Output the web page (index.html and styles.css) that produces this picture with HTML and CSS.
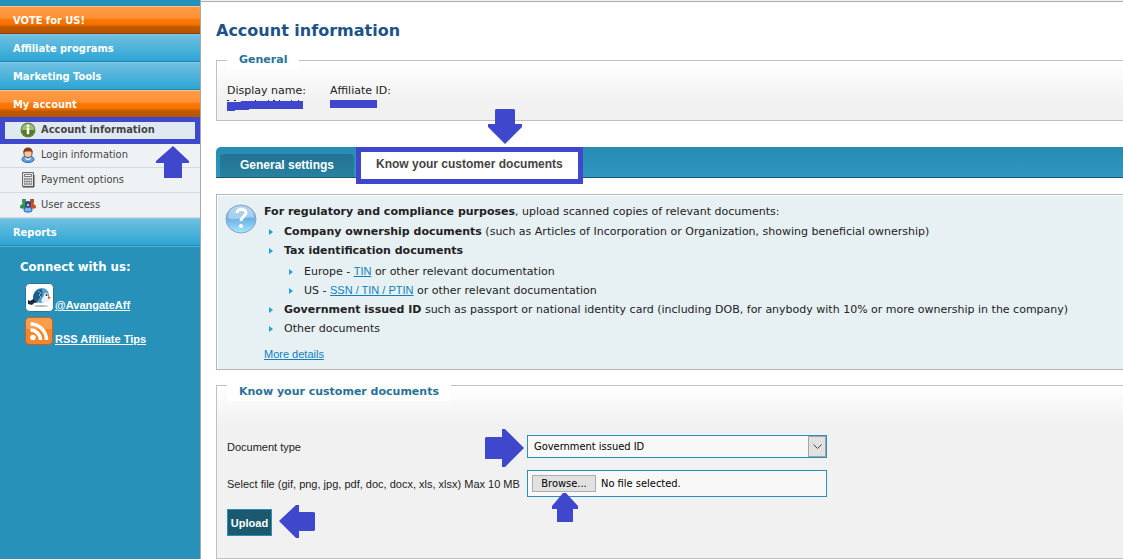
FILE: index.html
```html
<!DOCTYPE html>
<html lang="en">
<head>
    <meta charset="utf-8">
    <title>Account information</title>
    <meta name="viewport" content="width=device-width, initial-scale=1">
    <link rel="stylesheet" href="styles.css">
</head>
<body>
    <div class="page">
        <aside class="sidebar">
            <nav class="menu">
                <a class="menu-item orange" href="#">VOTE for US!</a>
                <a class="menu-item" href="#">Affiliate programs</a>
                <a class="menu-item" href="#">Marketing Tools</a>
                <a class="menu-item orange" href="#">My account</a>
                <div class="submenu">
                    <a class="submenu-item active" href="#">
                        <svg class="icon" width="16" height="16" viewBox="0 0 16 16">
                            <circle cx="8" cy="8" r="7.5" fill="#5f7f3c"/>
                            <circle cx="8" cy="8" r="6.5" fill="#9dbb74"/>
                            <path d="M1.5 8a6.5 6.5 0 0 0 13 0z" fill="#527d25"/>
                            <path d="M7 3h2v2H7zM7 6h2v6H7z" fill="#fff" stroke="#fff" stroke-width=".5"/>
                        </svg>
                        Account information
                    </a>
                    <a class="submenu-item" href="#">
                        <svg class="icon" width="16" height="16" viewBox="0 0 16 16">
                            <path d="M2 13c0-3 2-4 6-4s6 1 6 4c-1 1.500-3 2.500-6 2.500S3 14.500 2 13z" fill="#5ba5e8" stroke="#2f62b0"/>
                            <path d="M5 10l3 2 3-2-1 3H6z" fill="#d5ecff"/>
                            <path d="M4 4h8v3c0 2-2 3.500-4 3.500S4 9 4 7z" fill="#f6c49c" stroke="#84492e"/>
                            <path d="M3.500 6C3 2 5.500.5 8 .5S13 2 12.500 6L11 4H6z" fill="#8a3820"/>
                        </svg>
                        Login information
                    </a>
                    <a class="submenu-item" href="#">
                        <svg class="icon" width="16" height="16" viewBox="0 0 16 16">
                            <path d="M2.500.5h11v14h-11z" fill="#e2e2e4" stroke="#66676b"/>
                            <path d="M4.500 2.500h7v2h-7z" fill="#fff" stroke="#77787c"/>
                            <path d="M4 7h8M4 9.500h8M4 12h8" stroke="#696a6e" stroke-width="1.500" stroke-dasharray="1.500 .7"/>
                            <path d="M3 15h11V3" fill="none" stroke="#444"/>
                        </svg>
                        Payment options
                    </a>
                    <a class="submenu-item" href="#">
                        <svg class="icon" width="16" height="16" viewBox="0 0 16 16">
                            <path d="M0 11c0-3 1-4 3.500-4S7 8 7 11c-2 1-5 1-7 0z" fill="#249349"/>
                            <path d="M9 11c0-3 1-4 3.500-4S16 8 16 11c-2 1-5 1-7 0z" fill="#d44b20"/>
                            <path d="M2 2h4v4L4 8 2 6z" fill="#3e9557"/>
                            <path d="M10 2h4v4l-2 2-2-2z" fill="#ad512c"/>
                            <path d="M4 14c0-3 1-4 4-4s4 1 4 4c-2 1.500-6 1.500-8 0z" fill="#78b8f0" stroke="#275db5"/>
                            <path d="M5 5q3-2 6 0v4l-3 2-3-2z" fill="#34498c"/>
                            <path d="M7 7h2v2H7z" fill="#f2c29c"/>
                        </svg>
                        User access
                    </a>
                    <span class="highlight highlight-menu"></span>
                    <svg class="arrow arrow-menu" width="34" height="32" viewBox="0 0 34 32">
                        <path d="M17 0l16 15v2h-7v15H8V17H0v-2z"/>
                    </svg>
                </div>
                <a class="menu-item" href="#">Reports</a>
            </nav>
            <div class="connect">
                <h3>Connect with us:</h3>
                <a class="social" href="#">
                    <svg width="30" height="30" viewBox="0 0 30 30">
                        <rect x=".5" y=".5" width="28" height="28" rx="4" fill="#fff" stroke="#2f6f99"/>
                        <ellipse cx="16" cy="23" rx="7" ry="1" fill="#b9bcc0"/>
                        <path d="M3 17l2 1 5-3 4 4-5 1-2 2-4-1z" fill="#152a42"/>
                        <path d="M8 15c0-6 4-10 9-10 4 0 7 3 7 8 0 4-3 7-7 7-4 0-7-2-9-5z" fill="#5ba0cb"/>
                        <path d="M8 16c0-7 4-10 9-10 1 5 0 10-5 13z" fill="#1f5c8d"/>
                        <path d="M13 8l3 2-2 2 2 2-3 4" stroke="#74b4da" fill="none"/>
                        <path d="M18 14c2-2 5-1 6 0 0 4-3 6-6 6-2-1-2-4 0-6z" fill="#e5f1f8"/>
                        <circle cx="21" cy="12" r="2" fill="#fff"/>
                        <circle cx="21.500" cy="12" r="1" fill="#13263c"/>
                        <path d="M23 13l3 1.500-3 2z" fill="#e7672b"/>
                    </svg><span>@AvangateAff</span>
                </a>
                <a class="social" href="#">
                    <svg width="30" height="30" viewBox="0 0 30 30">
                        <rect x=".5" y=".5" width="27" height="27" rx="4" fill="#f5852a" stroke="#c0642b"/>
                        <path d="M1 5q0-4 4-4h18q4 0 4 4v7H1z" fill="#fa9d4b"/>
                        <circle cx="8" cy="20.500" r="2.800" fill="#fff"/>
                        <path d="M5.500 13a10 10 0 0 1 10 10M5.500 7a16 16 0 0 1 16 16" fill="none" stroke="#fff" stroke-width="3.500"/>
                    </svg><span>RSS Affiliate Tips</span>
                </a>
            </div>
        </aside>

        <main class="content">
            <h1>Account information</h1>

            <fieldset class="box general">
                <legend>General</legend>
                <dl class="details">
                    <div>
                        <dt>Display name:</dt>
                        <dd>
                            <svg width="76" height="11" viewBox="0 0 76 11">
                                <path d="M0 0h2v1H0zM7 0h2v1H7zM28 0h1v1h-1zM41 0h1v1h-1zM46 0h2v1h-2zM52 0h1v1h-1zM64 0h1v1h-1zM71 0h1v1h-1z" fill="#222"/>
                                <path d="M0 2h14V1h62v8H22v1H8v1H0z"/>
                            </svg>
                        </dd>
                    </div>
                    <div>
                        <dt>Affiliate ID:</dt>
                        <dd>
                            <svg width="47" height="11" viewBox="0 0 47 11">
                                <path d="M0 0h47v8H0z"/>
                            </svg>
                        </dd>
                    </div>
                </dl>
            </fieldset>

            <nav class="tabs">
                <a class="tab" href="#">General settings</a>
                <a class="tab selected" href="#">Know your customer documents
                    <svg class="arrow arrow-tab" width="34" height="35" viewBox="0 0 34 35">
                        <path d="M7 1l1-1h18l1 1v14h7v3L17 35 0 18v-3h7z"/>
                    </svg>
                </a>
            </nav>

            <section class="info">
                <svg class="help" width="32" height="32" viewBox="0 0 32 32">
                    <defs>
                        <linearGradient id="ball" x1="0" y1="0" x2="0" y2="1">
                            <stop offset="0" stop-color="#a9c9e8"/>
                            <stop offset=".5" stop-color="#6fb0e6"/>
                            <stop offset="1" stop-color="#a5eaff"/>
                        </linearGradient>
                    </defs>
                    <ellipse cx="16" cy="15" rx="15" ry="14" fill="url(#ball)" stroke="#8ba6bd"/>
                    <path d="M3 14C3 6 9 2 16 2s13 4 13 12c-7-3-18 4-26 0z" fill="#c7dff4" opacity=".6"/>
                    <path d="M12 9c0-5 9-5 9 0 0 3-5 3.500-5 8" fill="none" stroke="#fff" stroke-width="3"/>
                    <circle cx="16" cy="22" r="2" fill="#fff"/>
                </svg>
                <div class="info-text">
                    <p><strong>For regulatory and compliance purposes</strong>, upload scanned copies of relevant documents:</p>
                    <ul>
                        <li><strong>Company ownership documents</strong> (such as Articles of Incorporation or Organization, showing beneficial ownership)</li>
                        <li><strong>Tax identification documents</strong>
                            <ul>
                                <li>Europe - <a href="#">TIN</a> or other relevant documentation</li>
                                <li>US - <a href="#">SSN / TIN / PTIN</a> or other relevant documentation</li>
                            </ul>
                        </li>
                        <li><strong>Government issued ID</strong> such as passport or national identity card (including DOB, for anybody with 10% or more ownership in the company)</li>
                        <li>Other documents</li>
                    </ul>
                    <a class="more" href="#">More details</a>
                </div>
            </section>

            <fieldset class="box documents">
                <legend>Know your customer documents</legend>
                <form class="upload-form">
                    <label for="doc-type">Document type</label>
                    <div class="field">
                        <select id="doc-type">
                            <option>Government issued ID</option>
                        </select>
                        <span class="select-arrow">
                            <svg width="9" height="6" viewBox="0 0 9 6"><path d="M.5.5l4 4 4-4" fill="none" stroke="#444"/></svg>
                        </span>
                        <svg class="arrow arrow-select" width="39" height="38" viewBox="0 0 39 38">
                            <path d="M0 9l1-1h16V0h3l19 19-19 19h-3v-8H0z"/>
                        </svg>
                    </div>
                    <label for="doc-file">Select file (gif, png, jpg, pdf, doc, docx, xls, xlsx) Max 10 MB</label>
                    <div class="field file">
                        <span class="browse">Browse...</span>
                        <span>No file selected.</span>
                        <input type="file" id="doc-file">
                        <svg class="arrow arrow-file" width="26" height="29" viewBox="0 0 26 29">
                            <path d="M11 0h3l12 13v3h-5v13H5V16H0v-3z"/>
                        </svg>
                    </div>
                    <div class="actions">
                        <button type="submit">Upload</button>
                        <svg class="arrow arrow-upload" width="36" height="33" viewBox="0 0 36 33">
                            <path d="M0 16L17 0h3v7h15l1 1v17l-1 1H20v7h-3z"/>
                        </svg>
                    </div>
                </form>
            </fieldset>
        </main>
    </div>
</body>
</html>
```

FILE: styles.css
```css
* {
    box-sizing: border-box;
}
body {
    margin: 0;
    background-color: #fff;
    color: #222;
    font-family: Verdana, "DejaVu Sans", sans-serif;
    font-size: 11px;
}
.page {
    display: flex;
    min-height: 100vh;
}

/* left column */
.sidebar {
    width: 201px;
    flex-shrink: 0;
    padding-top: 6px;
    background-color: #2891b9;
    border-right: 1px solid #aaa;
}
.menu-item {
    display: block;
    height: 28px;
    padding-left: 13px;
    border-top: 1px solid #80cbe8;
    border-bottom: 1px solid #1f86ad;
    background: linear-gradient(#6fc0e0, #2da5d4);
    color: #fff;
    font-family: Tahoma, "DejaVu Sans Condensed", sans-serif;
    font-weight: bold;
    line-height: 27px;
    text-decoration: none;
}
.menu-item.orange {
    border-top-color: #ffc48a;
    border-bottom-color: #8a3a10;
    background: linear-gradient(#ff9c45 0%, #ff9238 40%, #fb7605 50%, #f97200 66%, #bd5900 78%, #b85600 100%);
}
.submenu {
    position: relative;
    background-color: #eef2f5;
}
.submenu-item {
    display: flex;
    align-items: center;
    gap: 5px;
    height: 25px;
    padding-left: 20px;
    border-bottom: 1px solid #d3d9de;
    color: #444;
    font-family: Tahoma, "DejaVu Sans Condensed", sans-serif;
    line-height: 26px;
    text-decoration: none;
}
.submenu-item.active {
    background-color: #dfe9f1;
    font-weight: bold;
}
.connect {
    padding: 12px 20px;
    border-top: 1px solid #55b4d8;
}
.connect h3 {
    margin: 0 0 8px;
    color: #fff;
    font-family: Tahoma, "DejaVu Sans Condensed", sans-serif;
    font-size: 13px;
    line-height: 16px;
}
.social {
    display: flex;
    align-items: flex-end;
    height: 30px;
    margin: 0 0 4px 5px;
    color: #fff;
    font-family: "Liberation Sans", Arial, sans-serif;
    font-weight: bold;
    line-height: 16px;
}

/* right column */
.content {
    flex: 1;
    min-width: 0;
    padding: 20px 0 0 15px;
    border-top: 1px solid #eef2f4;
    box-shadow: inset 0 1px #aaa;
}
h1 {
    margin: 0 0 11px;
    color: #1d5288;
    font-size: 16px;
    line-height: 19px;
}
.box {
    min-width: 0;
    margin: 0;
    padding: 0 10px;
    border: 1px solid #c0c0c0;
    border-right: 0;
    background: linear-gradient(#fff, #f1f1f1 40px);
}
.box legend {
    padding: 0 12px;
    background-color: #fff;
    color: #287298;
    font-weight: bold;
    line-height: 18px;
}
.general {
    height: 70px;
    margin-bottom: 26px;
}
.documents legend {
    padding-top: 13px;
}
.details {
    display: flex;
    gap: 24px;
    margin: 0;
    padding-top: 15px;
    line-height: 14px;
}
.details dd {
    margin: 2px 0 0;
    line-height: 0;
    fill: #3f48cc;
}

.tabs {
    display: flex;
    align-items: flex-end;
    gap: 2px;
    height: 31px;
    padding-left: 4px;
    border-bottom: 1px solid #155a78;
    border-radius: 5px 0 0 0;
    background: linear-gradient(#278bb2, #3097bf);
}
.tab {
    height: 23px;
    padding: 0 20px;
    border-radius: 4px 4px 0 0;
    background: linear-gradient(#237293, #27819f);
    color: #fff;
    font-family: "Liberation Sans", Arial, sans-serif;
    font-size: 12px;
    font-weight: bold;
    line-height: 22px;
    text-decoration: none;
}
.tab.selected {
    position: relative;
    align-self: flex-start;
    height: 37px;
    padding: 0 15px;
    border: 5px solid #3f48cc;
    border-radius: 0;
    background: #fff;
    color: #444;
    line-height: 24px;
}

.info {
    display: flex;
    gap: 7px;
    margin: 16px 0 0;
    padding: 9px 8px;
    border: 1px solid #b5b5b5;
    border-right: 0;
    background-color: #e7f0f3;
    box-shadow: inset 1px 1px #fff;
}
.help {
    flex-shrink: 0;
}
.info-text {
    line-height: 16px;
}
.info p {
    margin: 0 0 4px;
}
.info ul {
    margin: 0;
    padding: 0;
    list-style: none;
}
.info li {
    padding-left: 20px;
    margin-bottom: 3px;
    background: url("data:image/svg+xml,%3Csvg xmlns='http://www.w3.org/2000/svg' width='4' height='6'%3E%3Cpath d='M0 0l4 3-4 3z' fill='%231fa5dc'/%3E%3C/svg%3E") no-repeat 5px 5px;
}
.info ul ul {
    margin-top: 5px;
}
.info a {
    color: #1080bb;
    font-family: "Liberation Sans", Arial, sans-serif;
    line-height: 1;
}
.info .more {
    display: block;
    margin-top: 12px;
}

.upload-form {
    display: grid;
    grid-template-columns: 292px minmax(0, 300px);
    align-items: center;
    gap: 12px 8px;
    padding: 34px 0 22px;
    font-family: "Liberation Sans", Arial, sans-serif;
    white-space: nowrap;
}
.field {
    position: relative;
    height: 23px;
    border: 1px solid #2891b9;
    background-color: #f8f8f8;
    color: #000;
    font-family: Tahoma, "DejaVu Sans Condensed", sans-serif;
}
.field select {
    width: 100%;
    height: 100%;
    padding: 0 24px 0 6px;
    border: 0;
    appearance: none;
    background: none;
    color: inherit;
    font: inherit;
}
.select-arrow {
    position: absolute;
    top: 0;
    right: 0;
    display: flex;
    align-items: center;
    justify-content: center;
    width: 18px;
    height: 21px;
    border: 1px solid #a5a5a5;
    background-color: #e1e1e1;
    pointer-events: none;
}
.field.file {
    display: flex;
    align-items: center;
    gap: 5px;
    height: 27px;
    padding-left: 4px;
}
.browse {
    width: 64px;
    height: 17px;
    border: 1px solid #adadad;
    background-color: #e1e1e1;
    line-height: 15px;
    text-align: center;
}
.file input {
    position: absolute;
    inset: 0;
    width: 100%;
    opacity: 0;
}
.actions {
    position: relative;
    grid-column: 1 / -1;
}
.actions button {
    display: block;
    width: 45px;
    height: 27px;
    padding: 0;
    border: 1px solid #2891b9;
    background-color: #1b596f;
    color: #fff;
    font: bold 11px "Liberation Sans", Arial, sans-serif;
}

/* callouts */
.arrow {
    position: absolute;
    fill: #3f48cc;
    pointer-events: none;
}
.highlight {
    position: absolute;
    border: 5px solid #3f48cc;
    pointer-events: none;
}
.highlight-menu {
    inset: -1px 0 auto 0;
    height: 27px;
}
.arrow-menu {
    top: 28px;
    right: 10px;
}
.arrow-tab {
    top: -43px;
    left: 127px;
}
.arrow-select {
    top: -7px;
    left: -43px;
}
.arrow-file {
    top: 22px;
    left: 24px;
}
.arrow-upload {
    top: -4px;
    left: 52px;
}
```
